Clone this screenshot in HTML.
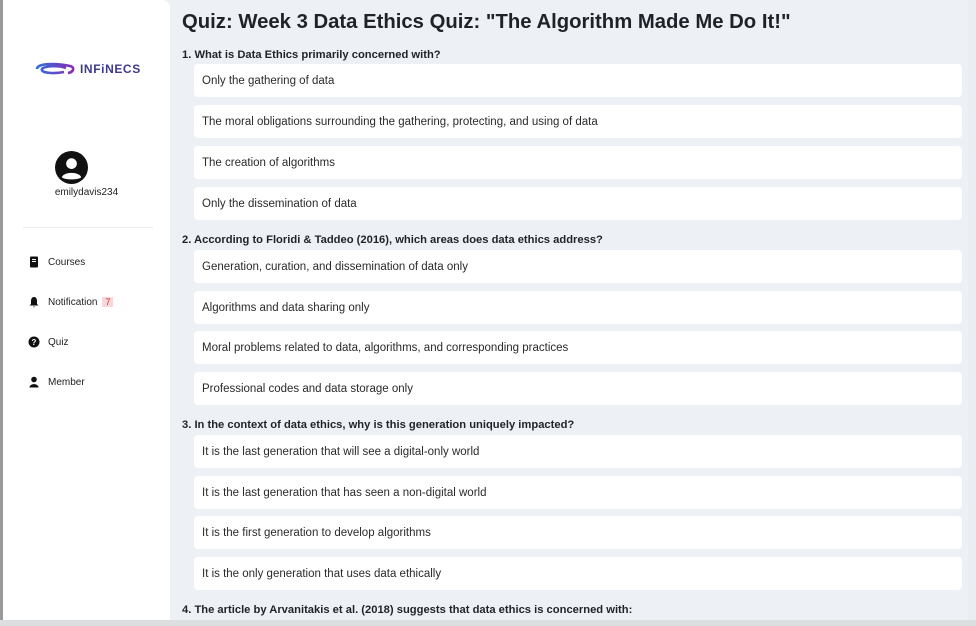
<!DOCTYPE html>
<html><head><meta charset="utf-8"><style>
*{margin:0;padding:0;box-sizing:border-box}
body{width:976px;height:626px;overflow:hidden;background:#edf1f5;font-family:"Liberation Sans",sans-serif;color:#212529;position:relative}
.strip{position:absolute;left:0;top:0;width:3px;height:626px;background:#9a9a9a}
.side{position:absolute;left:3px;top:0;width:167px;height:626px;background:#fff;border-top-right-radius:8px}
.logo{position:absolute;left:31px;top:61px;display:flex;align-items:center}
.logo span{font-weight:bold;font-size:12px;color:#3f3a8c;letter-spacing:0.6px;margin-left:4px}
.avatar{position:absolute;left:52px;top:151px;width:33px;height:33px}
.user{position:absolute;left:0;width:167px;top:187px;text-align:center;font-size:10px;color:#222}
.hr{position:absolute;left:20px;top:227px;width:130px;height:1px;background:#eee}
.nav{position:absolute;left:25px;font-size:10px;color:#222;display:flex;align-items:center}
.nav svg{width:12px;height:12px;margin-right:8px}
.badge{background:#f8d7da;color:#c0392b;font-size:9px;padding:0 3px;margin-left:5px}
h1{position:absolute;left:182px;top:11px;font-size:20.3px;font-weight:bold;color:#1f2329}
.q{position:absolute;left:182px;font-size:11.2px;font-weight:bold;color:#1f2329}
.o{position:absolute;left:194px;width:768px;height:33px;background:#fff;border-radius:4px;font-size:11.5px;padding:11px 0 0 8px;color:#2a2a2a}
.bot{position:absolute;left:0;top:620px;width:976px;height:6px;background:#dcdee0}
.rs{position:absolute;left:968px;top:0;width:8px;height:626px;background:#eaeef2}
</style></head><body>
<div class="strip"></div>
<div class="side">
<div class="logo"><svg width="42" height="16" viewBox="0 0 42 16"><defs><linearGradient id="g" x1="0" x2="1"><stop offset="0" stop-color="#2f6fd6"/><stop offset="1" stop-color="#8a2bb8"/></linearGradient></defs><path d="M3 8C3 2 22 2 36 5C41 6 40 11 34 12M32 7C25 4 10 5 8 8C6 12 20 13 30 11" fill="none" stroke="url(#g)" stroke-width="2.6"/></svg><span>INFiNECS</span></div>
<svg class="avatar" viewBox="0 0 34 34"><circle cx="17" cy="17" r="17" fill="#111"/><circle cx="17" cy="13" r="5.5" fill="#fff"/><path d="M7 27C9 21 25 21 27 27C24 30 10 30 7 27Z" fill="#fff"/></svg>
<div class="user">emilydavis234</div>
<div class="hr"></div>
<div class="nav" style="top:256px"><svg viewBox="0 0 12 12"><rect x="2" y="0.5" width="8" height="11" rx="1" fill="#111"/><rect x="4" y="3" width="4" height="1" fill="#fff"/><rect x="4" y="5" width="4" height="1" fill="#fff"/></svg>Courses</div>
<div class="nav" style="top:296px"><svg viewBox="0 0 12 12"><path d="M6 1C3.5 1 3 3.5 3 5V8L1.5 9.5H10.5L9 8V5C9 3.5 8.5 1 6 1Z M5 10.5H7L6 11.5Z" fill="#111"/></svg>Notification<span class="badge">7</span></div>
<div class="nav" style="top:336px"><svg viewBox="0 0 12 12"><circle cx="6" cy="6" r="5.5" fill="#111"/><text x="6" y="9" font-size="8" font-weight="bold" text-anchor="middle" fill="#fff" font-family="Liberation Sans">?</text></svg>Quiz</div>
<div class="nav" style="top:376px"><svg viewBox="0 0 12 12"><circle cx="6" cy="3.5" r="2.8" fill="#111"/><path d="M1.5 11.5C1.5 7 10.5 7 10.5 11.5Z" fill="#111"/></svg>Member</div>
</div>
<h1>Quiz: Week 3 Data Ethics Quiz: "The Algorithm Made Me Do It!"</h1>
<div class="q" style="top:49px">1. What is Data Ethics primarily concerned with?</div>
<div class="o" style="top:64px">Only the gathering of data</div>
<div class="o" style="top:105px">The moral obligations surrounding the gathering, protecting, and using of data</div>
<div class="o" style="top:146px">The creation of algorithms</div>
<div class="o" style="top:187px">Only the dissemination of data</div>
<div class="q" style="top:234px">2. According to Floridi &amp; Taddeo (2016), which areas does data ethics address?</div>
<div class="o" style="top:250px">Generation, curation, and dissemination of data only</div>
<div class="o" style="top:291px">Algorithms and data sharing only</div>
<div class="o" style="top:331px">Moral problems related to data, algorithms, and corresponding practices</div>
<div class="o" style="top:372px">Professional codes and data storage only</div>
<div class="q" style="top:419px">3. In the context of data ethics, why is this generation uniquely impacted?</div>
<div class="o" style="top:435px">It is the last generation that will see a digital-only world</div>
<div class="o" style="top:476px">It is the last generation that has seen a non-digital world</div>
<div class="o" style="top:516px">It is the first generation to develop algorithms</div>
<div class="o" style="top:557px">It is the only generation that uses data ethically</div>
<div class="q" style="top:604px">4. The article by Arvanitakis et al. (2018) suggests that data ethics is concerned with:</div>
<div class="rs"></div>
<div class="bot"></div>
</body></html>
